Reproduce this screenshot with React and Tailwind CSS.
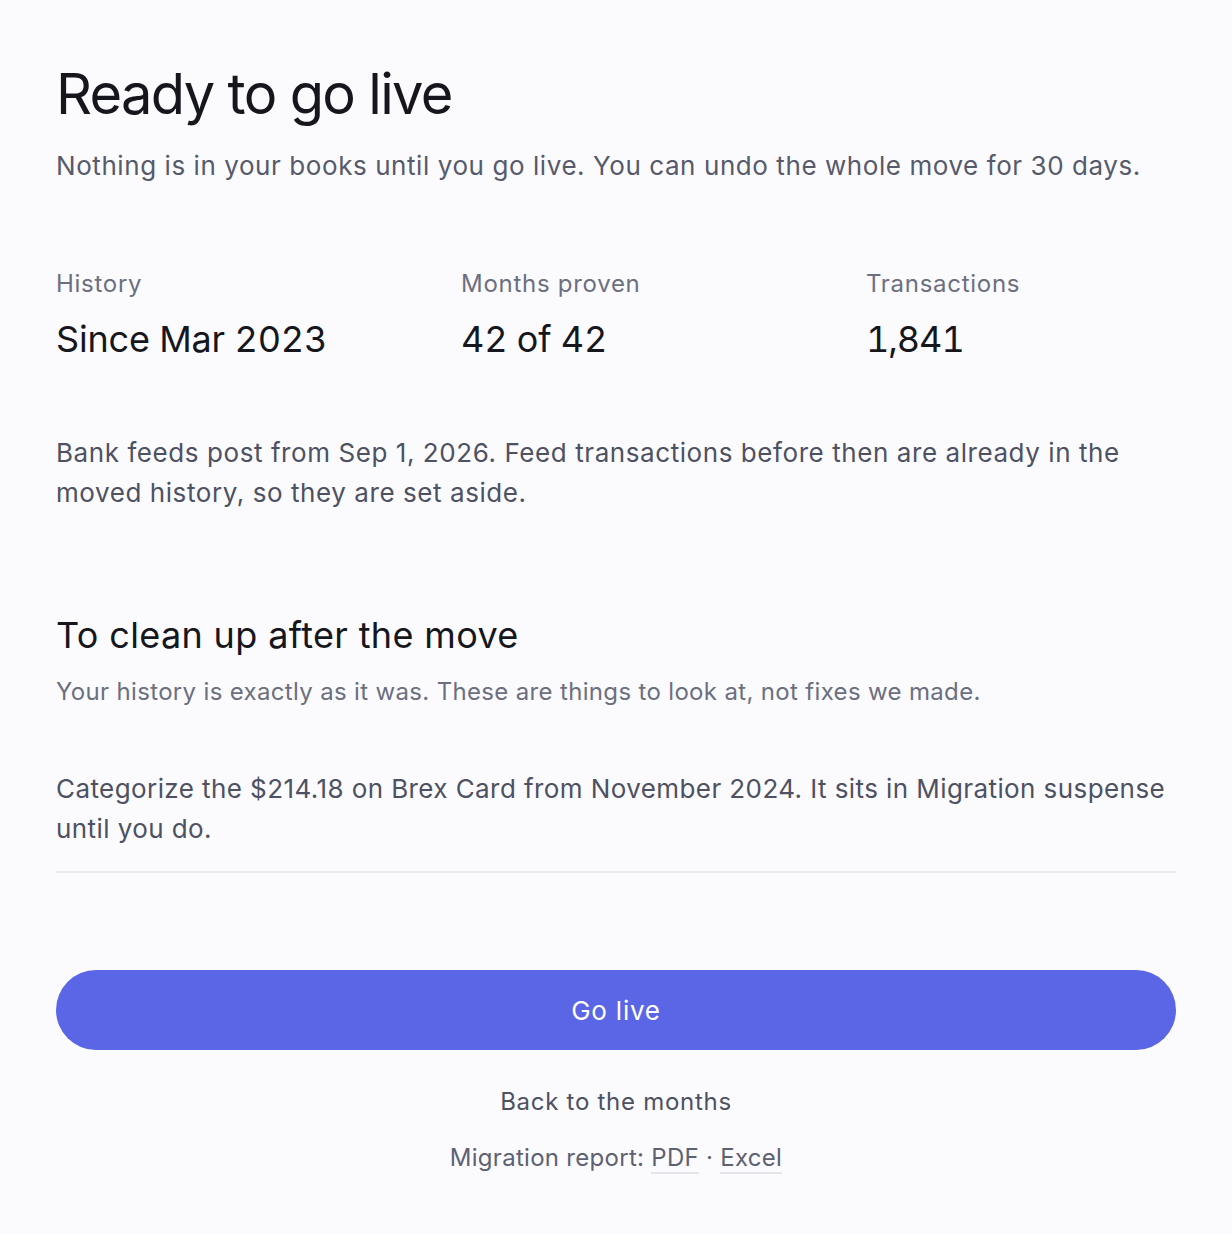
export default function App() {
  return (
    <div
      className="min-h-[1234px] bg-[#fbfbfe] px-14 pt-[58px] pb-14 text-[#16161d]"
      style={{ fontFamily: "Inter, 'Noto Sans', sans-serif" }}
    >
      {/* Header */}
      <h1 className="text-[56px] leading-[72px] font-normal tracking-[-0.03em]">
        Ready to go live
      </h1>
      <p className="mt-[18px] text-[26px] leading-[36px] tracking-[0.022em] text-[#565a6b]">
        Nothing is in your books until you go live. You can undo the whole move for 30 days.
      </p>

      {/* Stats */}
      <div className="mt-[84px] grid grid-cols-[310px_310px_310px] gap-x-[95px]">
        <div>
          <div className="text-[24px] leading-[32px] tracking-[0.03em] text-[#6b6f80]">History</div>
          <div className="mt-[17px] text-[36px] leading-[44px] tracking-[-0.005em] tabular-nums">Since Mar 2023</div>
        </div>
        <div>
          <div className="text-[24px] leading-[32px] tracking-[0.03em] text-[#6b6f80]">Months proven</div>
          <div className="mt-[17px] text-[36px] leading-[44px] tracking-[-0.005em] tabular-nums">42 of 42</div>
        </div>
        <div>
          <div className="text-[24px] leading-[32px] tracking-[0.03em] text-[#6b6f80]">Transactions</div>
          <div className="mt-[17px] text-[36px] leading-[44px] tracking-[-0.03em] tabular-nums">1,841</div>
        </div>
      </div>

      <p className="mt-[72px] text-[26px] leading-[40px] tracking-[0.022em] text-[#4d5162]">
        Bank feeds post from Sep 1, 2026. Feed transactions before then are already in the
        moved history, so they are set aside.
      </p>

      {/* Cleanup */}
      <h2 className="mt-[98px] text-[36px] leading-[48px] font-normal tracking-[0.01em]">
        To clean up after the move
      </h2>
      <p className="mt-[17px] text-[24px] leading-[32px] tracking-[0.014em] text-[#6b6f80]">
        Your history is exactly as it was. These are things to look at, not fixes we made.
      </p>

      <p className="mt-[61px] text-[26px] leading-[40px] tracking-[0.016em] text-[#4d5162]">
        Categorize the $214.18 on Brex Card from November 2024. It sits in Migration suspense
        until you do.
      </p>
      <div className="mt-[22px] border-t-2 border-[#e8e8ee]" />

      {/* Actions */}
      <button
        type="button"
        className="mt-[97px] w-full h-[80px] rounded-full bg-[#5a66e6] text-white text-[26px] tracking-[0.03em]"
      >
        Go live
      </button>

      <div className="mt-[36px] text-center text-[24px] leading-[32px] tracking-[0.03em] text-[#4d5162]">
        Back to the months
      </div>
      <div className="mt-[24px] text-center text-[24px] leading-[32px] tracking-[0.012em] text-[#5d6172]">
        Migration report:{" "}
        <span className="border-b-2 border-[#e4e4ec]">PDF</span>
        {" · "}
        <span className="border-b-2 border-[#e4e4ec]">Excel</span>
      </div>
    </div>
  );
}
